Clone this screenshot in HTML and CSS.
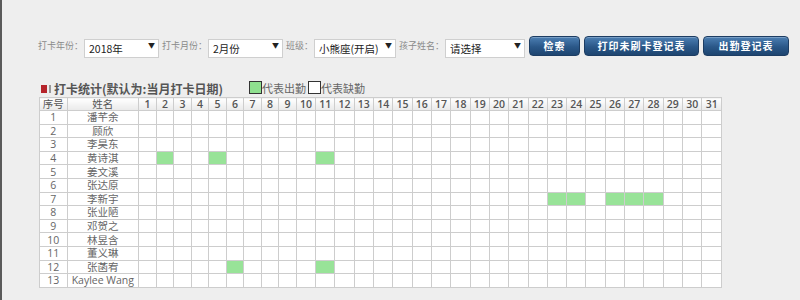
FILE: index.html
```html
<!DOCTYPE html>
<html>
<head>
  <meta charset="utf-8">
  <link rel="stylesheet" href="styles.css">
</head>
<body>
  <div class="page">
    <form class="search">
      <label class="lbl">打卡年份：</label>
      <span class="sel w75"><select><option>2018年</option></select><i>▼</i></span>
      <label class="lbl">打卡月份：</label>
      <span class="sel w75"><select><option>2月份</option></select><i>▼</i></span>
      <label class="lbl">班级：</label>
      <span class="sel w82"><select><option>小熊座(开启)</option></select><i>▼</i></span>
      <label class="lbl">孩子姓名：</label>
      <span class="sel w80"><select><option>请选择</option></select><i>▼</i></span>
      <button type="button" class="btn b1">检索</button>
      <button type="button" class="btn b2">打印未刷卡登记表</button>
      <button type="button" class="btn b3">出勤登记表</button>
    </form>

    <div class="title_row">
      <h2 class="title"><span class="mark"></span><span class="bar"></span>打卡统计(默认为:当月打卡日期)</h2>
      <span class="legend"><span class="box on"></span>代表出勤</span>
      <span class="legend"><span class="box"></span>代表缺勤</span>
    </div>

    <table class="grid" id="grid">
      <colgroup id="cols"></colgroup>
      <thead><tr id="head"></tr></thead>
      <tbody id="rows"></tbody>
    </table>
  </div>

  <script>
    var names = ["潘芊余","顾欣","李昊东","黄诗淇","姜文溪","张达原","李新宇","张业陋","邓贺之","林昱含","董义琳","张菡宥","Kaylee Wang"];
    // attended days per row index
    var present = { 3: [2,5,11], 6: [23,24,26,27,28], 11: [6,11] };

    var cols = '<col style="width:27.5px"><col style="width:71.5px">';
    var head = '<th>序号</th><th>姓名</th>';
    for (var d = 1; d <= 31; d++) {
      cols += '<col style="width:' + (d < 10 ? 17.5 : 19.3) + 'px">';
      head += '<th>' + d + '</th>';
    }
    document.getElementById("cols").innerHTML = cols;
    document.getElementById("head").innerHTML = head;

    var html = '';
    for (var i = 0; i < names.length; i++) {
      var days = present[i] || [];
      html += '<tr><td>' + (i + 1) + '</td><td>' + names[i] + '</td>';
      for (var d = 1; d <= 31; d++) {
        html += days.indexOf(d) >= 0 ? '<td class="on"></td>' : '<td></td>';
      }
      html += '</tr>';
    }
    document.getElementById("rows").innerHTML = html;
  </script>
</body>
</html>
```

FILE: styles.css
```css
body, html {
  height: 100%;
  margin: 0;
  background-color: #eeeeee;
  font-family: "Open Sans", "Noto Sans CJK SC", sans-serif;
}
body {
  border-left: 2px solid #5a5a5a;
  box-sizing: border-box;
}
.page {
  padding: 36px 0 0 33px;
}
.search {
  display: flex;
  align-items: center;
  height: 19px;
  margin: 0;
}
.lbl {
  font-family: "Noto Sans CJK SC", sans-serif;
  font-size: 9px;
  color: #8a8a8a;
  margin: 0 1px 0 3px;
  white-space: nowrap;
}
.sel {
  position: relative;
  display: inline-block;
  height: 19px;
}
.sel select {
  appearance: none;
  -webkit-appearance: none;
  width: 100%;
  height: 19px;
  margin: 0;
  padding: 0 0 0 4px;
  border: 1px solid #cfcfcf;
  border-radius: 0;
  background: #fff;
  font-family: "Noto Sans CJK SC", sans-serif;
  font-size: 10.5px;
  color: #222;
}
.sel i {
  position: absolute;
  right: 4px;
  top: 4px;
  font-style: normal;
  font-size: 7px;
  color: #222;
  pointer-events: none;
}
.w75 { width: 75px; }
.w82 { width: 82px; }
.w80 { width: 80px; }

.btn {
  height: 20px;
  margin-left: 4px;
  padding: 0;
  border: 1px solid #1d3d63;
  border-radius: 4px;
  background: linear-gradient(#4c7fb3, #2a5788 55%, #1e4570);
  box-shadow: inset 0 1px 0 rgba(255,255,255,0.25);
  color: #fff;
  font-family: "Noto Sans CJK SC", sans-serif;
  font-size: 10px;
  font-weight: bold;
  letter-spacing: 1px;
  cursor: pointer;
}
.b1 { width: 51px; }
.b2 { width: 115px; }
.b3 { width: 86px; }

.title_row {
  display: flex;
  align-items: flex-end;
  height: 19px;
  margin-top: 23px;
  padding-left: 6px;
}
.title {
  display: flex;
  align-items: center;
  margin: 0 26px 0 0;
  font-family: "Noto Sans CJK SC", sans-serif;
  font-size: 12px;
  font-weight: bold;
  color: #555;
  line-height: 16px;
}
.mark {
  width: 6px;
  height: 8px;
  background-color: #b5232a;
  margin-right: 2px;
}
.bar {
  width: 2px;
  height: 8px;
  background-color: #999;
  margin-right: 3px;
}
.legend {
  display: flex;
  align-items: flex-end;
  font-family: "Noto Sans CJK SC", sans-serif;
  font-size: 11px;
  color: #666;
  line-height: 12px;
  margin-right: 2px;
  margin-bottom: 3px;
}
.box {
  width: 11px;
  height: 11px;
  border: 1px solid #333;
  background-color: #fff;
}
.box.on {
  background-color: #8fe08f;
}

.grid {
  table-layout: fixed;
  width: 683px;
  margin-left: 4px;
  border-collapse: collapse;
  background-color: #fff;
  font-size: 10.5px;
  color: #666;
}
.grid th, .grid td {
  border: 1px solid #cdcdcd;
  padding: 0;
  text-align: center;
  white-space: nowrap;
  overflow: hidden;
  line-height: 12px;
}
.grid th {
  height: 12px;
  background: linear-gradient(#ffffff, #e9e9e9);
  color: #555;
  font-weight: 600;
}
.grid th:first-child, .grid th:nth-child(2) {
  font-weight: normal;
  font-family: "Noto Sans CJK SC", sans-serif;
}
.grid td {
  height: 12.6px;
  font-family: "Open Sans", "Noto Sans CJK SC", sans-serif;
}
.grid td.on {
  background-color: #98e398;
}
```
